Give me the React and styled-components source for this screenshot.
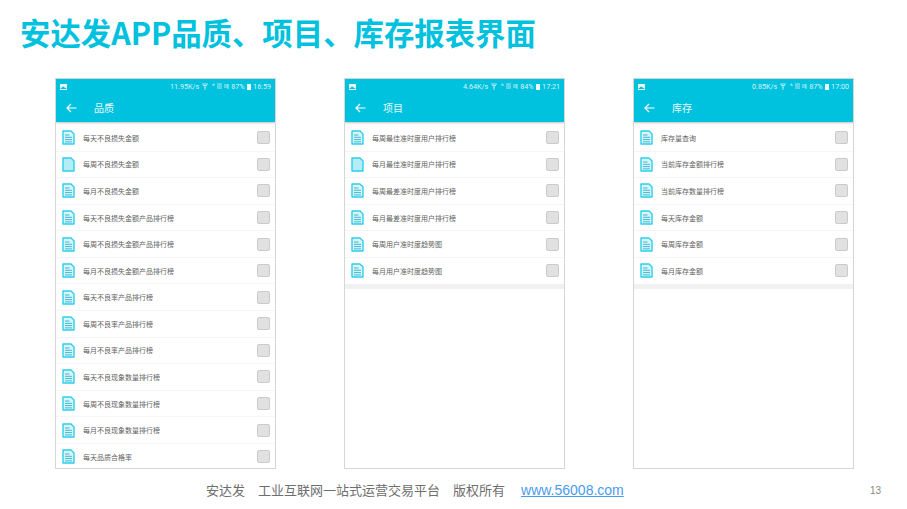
import styled, { createGlobalStyle } from "styled-components";

const GlobalStyle = createGlobalStyle`
  html, body { margin: 0; padding: 0; background: #fff; }
  body { font-family: "Liberation Sans", "Noto Sans CJK SC", sans-serif; }
`;

const CYAN = "#00c1de";

const Slide = styled.div`
  width: 907px;
  height: 509px;
  overflow: hidden;
  display: flex;
  flex-direction: column;
`;
const Title = styled.h1`
  margin: 0;
  padding: 10px 0 0 20px;
  height: 66px;
  box-sizing: border-box;
  font: 700 30.4px/44px "Noto Sans CJK SC", sans-serif;
  color: ${CYAN};
`;
const Phones = styled.div`
  display: flex;
  gap: 68px;
  padding: 12px 0 0 55px;
`;
const Phone = styled.div`
  width: 221px;
  height: 391px;
  box-sizing: border-box;
  border: 1px solid #d6d6d6;
  overflow: hidden;
  background: #fff;
`;
const Header = styled.div`
  background: ${CYAN};
  height: 43px;
  box-shadow: 0 1px 2px rgba(0, 0, 0, 0.25);
  position: relative;
`;
const StatusBar = styled.div`
  height: 15px;
  display: flex;
  align-items: center;
  justify-content: flex-end;
  gap: 2.5px;
  padding: 0 4px;
  color: #d9f5f9;
  font: 7.2px/15px "Roboto", sans-serif;
`;
const PicIcon = styled.svg`
  width: 7px;
  height: 6px;
  margin-right: auto;
`;
const Battery = styled.span`
  width: 3.5px;
  height: 6px;
  background: #e9fbfd;
`;
const NavBar = styled.div`
  height: 28px;
  display: flex;
  align-items: center;
  color: #e9fbfd;
  padding-left: 10px;
`;
const NavTitle = styled.span`
  margin-left: 17px;
  font: 10px/14px "Noto Sans CJK SC", sans-serif;
`;
const List = styled.div`
  padding-top: 3px;
`;
const Band = styled.div`
  height: 5px;
  background: #f1f1f1;
`;
const Row = styled.div`
  height: 26.58px;
  box-sizing: border-box;
  display: flex;
  align-items: center;
  padding: 0 5px 0 6px;
  border-bottom: 1px solid ${(p) => (p.$last ? "transparent" : "#f5f5f5")};
`;
const Label = styled.span`
  flex: 1;
  margin-left: 8px;
  color: #5f5f5f;
  font: 7px/10px "Noto Sans CJK SC", sans-serif;
`;
const Check = styled.span`
  width: 13px;
  height: 13px;
  box-sizing: border-box;
  background: #e1e1e1;
  border: 1px solid #cbcbcb;
  border-radius: 2px;
`;
const Footer = styled.div`
  position: relative;
  margin-top: 10px;
  height: 22px;
  padding-left: 206px;
  display: flex;
  align-items: center;
  color: #6e6e6e;
  font: 13px/22px "Noto Sans CJK SC", sans-serif;
`;
const FootPart = styled.span`
  margin-right: ${(p) => p.$gap}px;
`;
const Link = styled.a`
  color: #4a9bf0;
  text-decoration: underline;
  font: 14px/22px "Liberation Sans", sans-serif;
`;
const PageNo = styled.span`
  position: absolute;
  left: 870px;
  top: 2px;
  color: #888;
  font: 10px/20px "Liberation Sans", sans-serif;
`;

const DocIcon = ({ plain }) => (
  <svg width="13" height="15" viewBox="0 0 13 15">
    <path
      d="M1 1h8l3 3v10H1z"
      fill={plain ? "#b5edf7" : "#d8f7fc"}
      stroke="#2bcfe8"
      strokeWidth="1.4"
      strokeLinejoin="round"
    />
    {!plain && <path d="M3 5h4.5M3 7.3h7M3 9.6h7M3 11.9h7" stroke="#1aa6c6" strokeWidth="0.8" />}
  </svg>
);

const BackArrow = () => (
  <svg width="11" height="10" viewBox="0 0 11 10" fill="none" stroke="#fff" strokeWidth="1.2">
    <path d="M10.5 5H1M5 1 1 5l4 4" />
  </svg>
);

const StatusIcons = () => (
  <svg width="27" height="7" viewBox="0 0 27 7" fill="none" stroke="#d9f5f9" strokeWidth="0.8">
    <path d="M0 1h6M1 2.5h4M2 4h2M3 4v3" />
    <path d="M10 2h3M11 1h1M15 1h5M15 3h5M15 5h5M22 2h4M22 4h4M26 1v5" />
  </svg>
);

const screens = [
  {
    title: "品质",
    speed: "11.95K/s",
    battery: "87%",
    time: "16:59",
    plainIcon: 1,
    items: [
      "每天不良损失金额",
      "每周不良损失金额",
      "每月不良损失金额",
      "每天不良损失金额产品排行榜",
      "每周不良损失金额产品排行榜",
      "每月不良损失金额产品排行榜",
      "每天不良率产品排行榜",
      "每周不良率产品排行榜",
      "每月不良率产品排行榜",
      "每天不良现象数量排行榜",
      "每周不良现象数量排行榜",
      "每月不良现象数量排行榜",
      "每天品质合格率",
    ],
  },
  {
    title: "项目",
    speed: "4.64K/s",
    battery: "84%",
    time: "17:21",
    band: true,
    plainIcon: 1,
    items: [
      "每周最佳准时度用户排行榜",
      "每月最佳准时度用户排行榜",
      "每周最差准时度用户排行榜",
      "每月最差准时度用户排行榜",
      "每周用户准时度趋势图",
      "每月用户准时度趋势图",
    ],
  },
  {
    title: "库存",
    speed: "0.85K/s",
    battery: "87%",
    time: "17:00",
    band: true,
    items: [
      "库存量查询",
      "当前库存金额排行榜",
      "当前库存数量排行榜",
      "每天库存金额",
      "每周库存金额",
      "每月库存金额",
    ],
  },
];

const App = () => {
  return (
    <Slide>
      <GlobalStyle />
      <Title>安达发APP品质、项目、库存报表界面</Title>
      <Phones>
        {screens.map((s) => (
          <Phone key={s.title}>
            <Header>
              <StatusBar>
                <PicIcon viewBox="0 0 7 6">
                  <rect width="7" height="6" fill="#e4f8fb" />
                  <path d="M0 5 3 2.5 7 5z" fill={CYAN} />
                </PicIcon>
                <span>{s.speed}</span>
                <StatusIcons />
                <span>{s.battery}</span>
                <Battery />
                <span>{s.time}</span>
              </StatusBar>
              <NavBar>
                <BackArrow />
                <NavTitle>{s.title}</NavTitle>
              </NavBar>
            </Header>
            <List>
              {s.items.map((item, i) => (
                <Row key={item} $last={s.band && i === s.items.length - 1}>
                  <DocIcon plain={s.plainIcon === i} />
                  <Label>{item}</Label>
                  <Check />
                </Row>
              ))}
            </List>
            {s.band && <Band />}
          </Phone>
        ))}
      </Phones>
      <Footer>
        <FootPart $gap={13}>安达发</FootPart>
        <FootPart $gap={13}>工业互联网一站式运营交易平台</FootPart>
        <FootPart $gap={16}>版权所有</FootPart>
        <Link>www.56008.com</Link>
        <PageNo>13</PageNo>
      </Footer>
    </Slide>
  );
};

export default App;
